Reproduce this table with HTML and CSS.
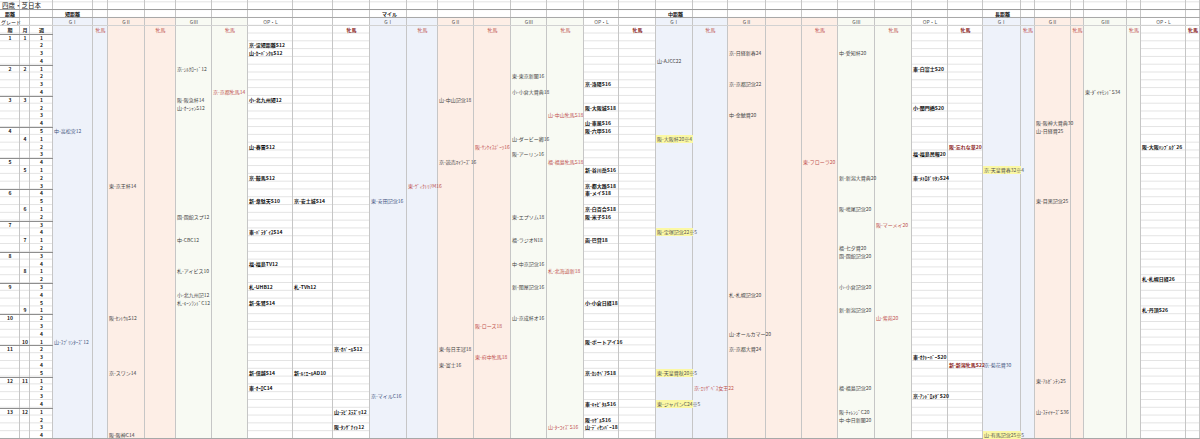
FILE: index.html
```html
<!DOCTYPE html>
<html lang="ja">
<head>
<meta charset="utf-8">
<title>四歳・芝日本</title>
<link rel="stylesheet" href="styles.css">
</head>
<body>
<div class="sheet">
  <div class="s c0"></div><div class="s c1"></div><div class="s c2"></div>
  <div class="s g1 c3"></div><div class="s g1 c4"></div><div class="s g2 c5"></div><div class="s g2 c6"></div><div class="s g3 c7"></div><div class="s g3 c8"></div><div class="s c9"></div><div class="s c10"></div><div class="s c11"></div>
  <div class="s g1 c12"></div><div class="s g1 c13"></div><div class="s g2 c14"></div><div class="s g2 c15"></div><div class="s g3 c16"></div><div class="s g3 c17"></div><div class="s c18"></div><div class="s c19"></div>
  <div class="s g1 c20"></div><div class="s g1 c21"></div><div class="s g2 c22"></div><div class="s g2 c23"></div><div class="s g2 c24"></div><div class="s g3 c25"></div><div class="s g3 c26"></div><div class="s c27"></div><div class="s c28"></div>
  <div class="s g1 c29"></div><div class="s g1 c30"></div><div class="s g2 c31"></div><div class="s g2 c32"></div><div class="s g3 c33"></div><div class="s g3 c34"></div><div class="s c35"></div><div class="s c36"></div>

  <div class="line1"></div><div class="line2"></div><div class="line3"></div><div class="endline"></div>

  <div class="title">四歳・芝日本</div>

  <div class="dist hb lead">距離</div>
  <div class="dist sec hb c3">短距離</div>
  <div class="dist sec hb c12">マイル</div>
  <div class="dist sec hb c20">中距離</div>
  <div class="dist sec hb c29">長距離</div>

  <div class="grade hc lead">グレード</div>
  <div class="grade hc c3">GⅠ</div><div class="grade hc c5">GⅡ</div><div class="grade hc c7">GⅢ</div><div class="grade hc c9">OP・L</div>
  <div class="grade hc c12">GⅠ</div><div class="grade hc c14">GⅡ</div><div class="grade hc c16">GⅢ</div><div class="grade hc c18">OP・L</div>
  <div class="grade hc c20">GⅠ</div><div class="grade hc c22">GⅡ</div><div class="grade hc c25">GⅢ</div><div class="grade hc c27">OP・L</div>
  <div class="grade hc c29">GⅠ</div><div class="grade hc c31">GⅡ</div><div class="grade hc c33">GⅢ</div><div class="grade hc c35">OP・L</div>

  <div class="hdr hd c0 bold">期</div><div class="hdr hd c1 bold">月</div><div class="hdr hd c2 bold">週</div>
  <div class="hdr hd c4 fm">牝馬</div><div class="hdr hd c6 fm">牝馬</div><div class="hdr hd c8 fm">牝馬</div><div class="hdr hd c11 fmb">牝馬</div>
  <div class="hdr hd c13 fm">牝馬</div><div class="hdr hd c15 fm">牝馬</div><div class="hdr hd c17 fm">牝馬</div><div class="hdr hd c19 fmb">牝馬</div>
  <div class="hdr hd c21 fm">牝馬</div><div class="hdr hd c24 fm">牝馬</div><div class="hdr hd c26 fm">牝馬</div><div class="hdr hd c28 fmb">牝馬</div>
  <div class="hdr hd c30 fm">牝馬</div><div class="hdr hd c32 fm">牝馬</div><div class="hdr hd c34 fm">牝馬</div><div class="hdr hd c36 fmb">牝馬</div>

  <div class="weeks">
    <div class="wk p"><i>1</i><i>1</i><i>1</i></div>
    <div class="wk"><i></i><i></i><i>2</i></div>
    <div class="wk"><i></i><i></i><i>3</i></div>
    <div class="wk"><i></i><i></i><i>4</i></div>
    <div class="wk p"><i>2</i><i>2</i><i>1</i></div>
    <div class="wk"><i></i><i></i><i>2</i></div>
    <div class="wk"><i></i><i></i><i>3</i></div>
    <div class="wk"><i></i><i></i><i>4</i></div>
    <div class="wk p"><i>3</i><i>3</i><i>1</i></div>
    <div class="wk"><i></i><i></i><i>2</i></div>
    <div class="wk"><i></i><i></i><i>3</i></div>
    <div class="wk"><i></i><i></i><i>4</i></div>
    <div class="wk p"><i>4</i><i></i><i>5</i></div>
    <div class="wk"><i></i><i>4</i><i>1</i></div>
    <div class="wk"><i></i><i></i><i>2</i></div>
    <div class="wk"><i></i><i></i><i>3</i></div>
    <div class="wk p"><i>5</i><i></i><i>4</i></div>
    <div class="wk"><i></i><i>5</i><i>1</i></div>
    <div class="wk"><i></i><i></i><i>2</i></div>
    <div class="wk"><i></i><i></i><i>3</i></div>
    <div class="wk p"><i>6</i><i></i><i>4</i></div>
    <div class="wk"><i></i><i></i><i>5</i></div>
    <div class="wk"><i></i><i>6</i><i>1</i></div>
    <div class="wk"><i></i><i></i><i>2</i></div>
    <div class="wk p"><i>7</i><i></i><i>3</i></div>
    <div class="wk"><i></i><i></i><i>4</i></div>
    <div class="wk"><i></i><i>7</i><i>1</i></div>
    <div class="wk"><i></i><i></i><i>2</i></div>
    <div class="wk p"><i>8</i><i></i><i>3</i></div>
    <div class="wk"><i></i><i></i><i>4</i></div>
    <div class="wk"><i></i><i>8</i><i>1</i></div>
    <div class="wk"><i></i><i></i><i>2</i></div>
    <div class="wk p"><i>9</i><i></i><i>3</i></div>
    <div class="wk"><i></i><i></i><i>4</i></div>
    <div class="wk"><i></i><i></i><i>5</i></div>
    <div class="wk"><i></i><i>9</i><i>1</i></div>
    <div class="wk p"><i>10</i><i></i><i>2</i></div>
    <div class="wk"><i></i><i></i><i>3</i></div>
    <div class="wk"><i></i><i></i><i>4</i></div>
    <div class="wk"><i></i><i>10</i><i>1</i></div>
    <div class="wk p"><i>11</i><i></i><i>2</i></div>
    <div class="wk"><i></i><i></i><i>3</i></div>
    <div class="wk"><i></i><i></i><i>4</i></div>
    <div class="wk"><i></i><i></i><i>5</i></div>
    <div class="wk p"><i>12</i><i>11</i><i>1</i></div>
    <div class="wk"><i></i><i></i><i>2</i></div>
    <div class="wk"><i></i><i></i><i>3</i></div>
    <div class="wk"><i></i><i></i><i>4</i></div>
    <div class="wk p"><i>13</i><i>12</i><i>1</i></div>
    <div class="wk"><i></i><i></i><i>2</i></div>
    <div class="wk"><i></i><i></i><i>3</i></div>
    <div class="wk"><i></i><i></i><i>4</i></div>
  </div>

  <!-- 短距離 -->
  <div class="e b r12 c3">中-高松宮12</div>
  <div class="e b r39 c3">山-ｽﾌﾟﾘﾝﾀｰｽﾞ12</div>
  <div class="e n r19 c5">東-京王杯14</div>
  <div class="e n r36 c5">阪-ｾﾝﾄｳﾙS12</div>
  <div class="e n r43 c5">京-スワン14</div>
  <div class="e n r51 c5">阪-阪神C14</div>
  <div class="e n r4 c7">京-ｼﾙｸﾛｰﾄﾞ12</div>
  <div class="e n r8 c7">阪-阪急杯14</div>
  <div class="e n r9 c7">山-ｵｰｼｬﾝS12</div>
  <div class="e n r23 c7">函-函館スプ12</div>
  <div class="e n r26 c7">中-CBC12</div>
  <div class="e n r30 c7">札-アイビス10</div>
  <div class="e n r33 c7">小-北九州記12</div>
  <div class="e n r34 c7">札-ｷｰﾝﾗﾝﾄﾞC12</div>
  <div class="e red r7 c8">京-京都牝馬14</div>
  <div class="e op r1 c9">京-淀短距離S12</div>
  <div class="e op r2 c9">山-ｶｰﾊﾞﾝｸﾙS12</div>
  <div class="e op r8 c9">小-北九州短12</div>
  <div class="e op r14 c9">山-春雷S12</div>
  <div class="e op r18 c9">京-鞍馬S12</div>
  <div class="e op r21 c9">新-韋駄天S10</div>
  <div class="e op r25 c9">東-ﾊﾟﾗﾀﾞｲｽS14</div>
  <div class="e op r29 c9">福-福島TV12</div>
  <div class="e op r32 c9">札-UHB12</div>
  <div class="e op r34 c9">新-朱鷺S14</div>
  <div class="e op r43 c9">新-信越S14</div>
  <div class="e op r45 c9">東-ｵｰﾛC14</div>
  <div class="e op r21 c10">京-安土城S14</div>
  <div class="e op r32 c10">札-TVh12</div>
  <div class="e op r43 c10">新-ﾙﾐｴｰﾙAD10</div>
  <div class="e op r40 c11">京-ｵﾊﾟｰﾙS12</div>
  <div class="e op r48 c11">山-ﾗﾋﾟｽﾗｽﾞﾘ12</div>
  <div class="e op r50 c11">阪-ﾀﾝｻﾞﾅｲﾄ12</div>

  <!-- マイル -->
  <div class="e b r21 c12">東-安田記念16</div>
  <div class="e b r46 c12">京-マイルC16</div>
  <div class="e red r19 c13">東-ｳﾞｨｸﾄﾘｱM16</div>
  <div class="e n r8 c14">山-中山記念18</div>
  <div class="e n r16 c14">京-読売ﾏｲﾗｰｽﾞ16</div>
  <div class="e n r40 c14">東-毎日王冠18</div>
  <div class="e n r42 c14">東-富士16</div>
  <div class="e red r14 c15">阪-ｻﾝｹｲｽﾎﾟｰﾂ16</div>
  <div class="e red r37 c15">阪-ローズ18</div>
  <div class="e red r41 c15">東-府中牝馬18</div>
  <div class="e n r5 c16">東-東京新聞16</div>
  <div class="e n r7 c16">小-小倉大賞典18</div>
  <div class="e n r13 c16">山-ダービー卿16</div>
  <div class="e n r15 c16">阪-アーリン16</div>
  <div class="e n r23 c16">東-エプソム18</div>
  <div class="e n r26 c16">福-ラジオN18</div>
  <div class="e n r29 c16">中-中京記念16</div>
  <div class="e n r32 c16">新-関屋記念16</div>
  <div class="e n r36 c16">山-京成杯オ16</div>
  <div class="e red r10 c17">山-中山牝馬S18</div>
  <div class="e red r16 c17">福-福島牝馬S18</div>
  <div class="e red r30 c17">札-北海道新18</div>
  <div class="e red r50 c17">山-ﾀｰｺｲｽﾞS16</div>
  <div class="e op r6 c18">京-洛陽S16</div>
  <div class="e op r9 c18">阪-大阪城S18</div>
  <div class="e op r11 c18">山-東風S16</div>
  <div class="e op r12 c18">阪-六甲S16</div>
  <div class="e op r17 c18">新-谷川岳S16</div>
  <div class="e op r19 c18">京-都大路S18</div>
  <div class="e op r20 c18">東-メイS18</div>
  <div class="e op r22 c18">京-白百合S18</div>
  <div class="e op r23 c18">阪-米子S16</div>
  <div class="e op r26 c18">函-巴賞18</div>
  <div class="e op r34 c18">小-小倉日経18</div>
  <div class="e op r39 c18">阪-ポートアイ16</div>
  <div class="e op r43 c18">京-ｶｼｵﾍﾟｱS18</div>
  <div class="e op r47 c18">東-ｷｬﾋﾟﾀﾙS16</div>
  <div class="e op r49 c18">阪-ﾘｹﾞﾙS16</div>
  <div class="e op r50 c18">山-ﾃﾞｨｾﾝﾊﾞｰ18</div>

  <!-- 中距離 -->
  <div class="e n r3 c20">山-AJCC22</div>
  <div class="e hl r13 c20">阪-大阪杯20※4</div>
  <div class="e hl r25 c20">阪-宝塚記念22※5</div>
  <div class="e hl r43 c20">東-天皇賞秋20※5</div>
  <div class="e hl r47 c20">東-ジャパンC24※5</div>
  <div class="e red r45 c21">京-ｴﾘｻﾞﾍﾞｽ女王22</div>
  <div class="e n r2 c22">京-日経新春24</div>
  <div class="e n r6 c22">京-京都記念22</div>
  <div class="e n r10 c22">中-金鯱賞20</div>
  <div class="e n r33 c22">札-札幌記念20</div>
  <div class="e n r38 c22">山-オールカマー20</div>
  <div class="e n r40 c22">京-京都大賞24</div>
  <div class="e red r16 c24">東-フローラ20</div>
  <div class="e n r2 c25">中-愛知杯20</div>
  <div class="e n r18 c25">新-新潟大賞典20</div>
  <div class="e n r22 c25">阪-鳴尾記念20</div>
  <div class="e n r27 c25">福-七夕賞20</div>
  <div class="e n r28 c25">函-函館記念20</div>
  <div class="e n r32 c25">小-小倉記念20</div>
  <div class="e n r35 c25">新-新潟記念20</div>
  <div class="e n r45 c25">福-福島記念20</div>
  <div class="e n r48 c25">阪-ﾁｬﾚﾝｼﾞC20</div>
  <div class="e n r49 c25">中-中日新聞20</div>
  <div class="e red r24 c26">阪-マーメイ20</div>
  <div class="e red r36 c26">山-紫苑20</div>
  <div class="e op r4 c27">東-白富士S20</div>
  <div class="e op r9 c27">小-関門橋S20</div>
  <div class="e op r15 c27">福-福島民報20</div>
  <div class="e op r18 c27">東-ﾒﾄﾛﾎﾟﾘﾀﾝS24</div>
  <div class="e op r41 c27">東-ｵｸﾄｰﾊﾞｰS20</div>
  <div class="e op r46 c27">京-ｱﾝﾄﾞﾛﾒﾀﾞS20</div>
  <div class="e opr r14 c28">阪-忘れな草20</div>
  <div class="e opr r42 c28">新-新潟牝馬S22</div>

  <!-- 長距離 -->
  <div class="e hl r17 c29">京-天皇賞春32※4</div>
  <div class="e b r42 c29">京-菊花賞30</div>
  <div class="e hl r51 c29">山-有馬記念25※5</div>
  <div class="e n r11 c31">阪-阪神大賞典30</div>
  <div class="e n r12 c31">山-日経賞25</div>
  <div class="e n r21 c31">東-目黒記念25</div>
  <div class="e n r44 c31">東-ｱﾙｾﾞﾝﾁﾝ25</div>
  <div class="e n r48 c31">山-ｽﾃｲﾔｰｽﾞS36</div>
  <div class="e n r7 c33">東-ﾀﾞｲﾔﾓﾝﾄﾞS34</div>
  <div class="e op r14 c35">阪-大阪ﾊﾝﾌﾞﾙｸﾞ26</div>
  <div class="e op r31 c35">札-札幌日経26</div>
  <div class="e op r35 c35">札-丹頂S26</div>
</div>
</body>
</html>
```
FILE: styles.css
```css
* { box-sizing: border-box; margin: 0; padding: 0; }
html, body { background: #fff; overflow: hidden; }
body { font-family: "Noto Sans CJK JP", "Noto Sans", sans-serif; color: #333; }

.sheet {
  display: grid;
  width: 1200px;
  height: 439px;
  overflow: hidden;
  grid-template-columns: 20px 10px 23px 40px 15px 37px 31px 36px 36px 45px 40px 37px 37px 31px 36px 37px 36px 37px 35px 37px 37px 35px 38px 36px 36px 37px 37px 36px 35px 38px 14px 36px 13px 43px 14px 45px 14px;
  grid-template-rows: 10px 8px 8px 7.5px repeat(52, 7.8px);
}

/* column strips */
.s {
  grid-row: 1 / -1;
  border-right: 1px solid #c6c6c6;
  background-image:
    linear-gradient(to bottom, transparent 18px, var(--fill, transparent) 18px),
    linear-gradient(to bottom, transparent 6.8px, #e3e3e3 6.8px);
  background-size: 100% 100%, 100% 7.8px;
  background-position: 0 0, 0 33.5px;
  background-repeat: no-repeat, repeat-y;
}
.g1 { --fill: #eef2fa; }
.g2 { --fill: #fdeee6; }
.g3 { --fill: #f8faf3; }

.line1 { grid-row: 1; grid-column: 1 / -1; border-bottom: 1px solid #9c9c9c; }
.line2 { grid-row: 2; grid-column: 1 / -1; border-bottom: 1px solid #a8a8a8; }
.line3 { grid-row: 3; grid-column: 1 / -1; border-bottom: 1px solid #d2d2d2; }
.endline { grid-row: 56; grid-column: 1 / -1; border-bottom: 1px solid #a8a8a8; }

/* header texts */
.title { grid-row: 1; grid-column: 1 / 12; font-size: 6.5px; line-height: 10px; padding-left: 2px; color: #222; white-space: nowrap; }
.lead { grid-column: 1 / 4; text-align: left; padding-left: 2px; }
.dist { font-size: 5px; font-weight: 700; line-height: 8px; white-space: nowrap; color: #111; }
.dist.lead { padding-left: 5px; }
.dist.sec { padding-left: 12px; }
.grade { font-size: 5px; line-height: 8px; text-align: center; color: #555; white-space: nowrap; }
.grade.lead { text-align: left; padding-left: 1px; color: #222; }
.hdr { font-size: 5px; line-height: 7.5px; text-align: center; white-space: nowrap; }
.bold { font-weight: 700; color: #222; }
.fm { color: #c0504d; }
.fmb { color: #8b1c1c; font-weight: 700; }

.ha { grid-row: 1; } .hb { grid-row: 2; } .hc { grid-row: 3; } .hd { grid-row: 4; }

/* week / month / period columns */
.weeks {
  grid-column: 1 / 4;
  grid-row: 5 / -1;
  display: grid;
  grid-template-columns: 20px 10px 23px;
  grid-auto-rows: 7.8px;
}
.wk { display: contents; }
.weeks i { font-style: normal; font-size: 5px; font-weight: 700; line-height: 7.8px; text-align: center; color: #222; }
.wk.p i { box-shadow: inset 0 1px #8e8e8e; }

/* entries */
.e { font-size: 5px; line-height: 7.8px; white-space: nowrap; padding-left: 1px; }
.n { color: #444; }
.b { color: #44557f; }
.red { color: #c0504d; }
.op { color: #111; font-weight: 700; }
.opr { color: #8b1c1c; font-weight: 700; }
.hl { background: #fbf8a4; color: #555; }

/* columns */
.c0{grid-column:1}.c1{grid-column:2}.c2{grid-column:3}.c3{grid-column:4}.c4{grid-column:5}
.c5{grid-column:6}.c6{grid-column:7}.c7{grid-column:8}.c8{grid-column:9}.c9{grid-column:10}
.c10{grid-column:11}.c11{grid-column:12}.c12{grid-column:13}.c13{grid-column:14}.c14{grid-column:15}
.c15{grid-column:16}.c16{grid-column:17}.c17{grid-column:18}.c18{grid-column:19}.c19{grid-column:20}
.c20{grid-column:21}.c21{grid-column:22}.c22{grid-column:23}.c23{grid-column:24}.c24{grid-column:25}
.c25{grid-column:26}.c26{grid-column:27}.c27{grid-column:28}.c28{grid-column:29}.c29{grid-column:30}
.c30{grid-column:31}.c31{grid-column:32}.c32{grid-column:33}.c33{grid-column:34}.c34{grid-column:35}
.c35{grid-column:36}.c36{grid-column:37}

/* week rows */
.r0{grid-row:5}.r1{grid-row:6}.r2{grid-row:7}.r3{grid-row:8}.r4{grid-row:9}.r5{grid-row:10}
.r6{grid-row:11}.r7{grid-row:12}.r8{grid-row:13}.r9{grid-row:14}.r10{grid-row:15}.r11{grid-row:16}
.r12{grid-row:17}.r13{grid-row:18}.r14{grid-row:19}.r15{grid-row:20}.r16{grid-row:21}.r17{grid-row:22}
.r18{grid-row:23}.r19{grid-row:24}.r20{grid-row:25}.r21{grid-row:26}.r22{grid-row:27}.r23{grid-row:28}
.r24{grid-row:29}.r25{grid-row:30}.r26{grid-row:31}.r27{grid-row:32}.r28{grid-row:33}.r29{grid-row:34}
.r30{grid-row:35}.r31{grid-row:36}.r32{grid-row:37}.r33{grid-row:38}.r34{grid-row:39}.r35{grid-row:40}
.r36{grid-row:41}.r37{grid-row:42}.r38{grid-row:43}.r39{grid-row:44}.r40{grid-row:45}.r41{grid-row:46}
.r42{grid-row:47}.r43{grid-row:48}.r44{grid-row:49}.r45{grid-row:50}.r46{grid-row:51}.r47{grid-row:52}
.r48{grid-row:53}.r49{grid-row:54}.r50{grid-row:55}.r51{grid-row:56}
```
